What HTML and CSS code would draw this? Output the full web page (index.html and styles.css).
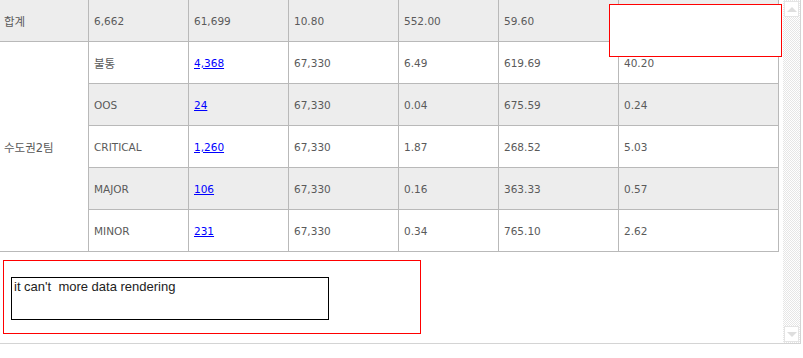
FILE: index.html
```html
<!DOCTYPE html>
<html>
<head>
<meta charset="utf-8">
<link rel="stylesheet" href="styles.css">
</head>
<body>
<div class="frame">
  <div class="content">
    <table class="grid">
      <colgroup>
        <col class="c1"><col class="c2"><col class="c3"><col class="c4"><col class="c5"><col class="c6"><col class="c7">
      </colgroup>
      <tr class="gray">
        <td class="ko">합계</td><td>6,662</td><td>61,699</td><td>10.80</td><td>552.00</td><td>59.60</td><td></td>
      </tr>
      <tr>
        <td rowspan="5" class="team ko">수도권2팀</td><td class="ko">불통</td><td><a href="#">4,368</a></td><td>67,330</td><td>6.49</td><td>619.69</td><td>40.20</td>
      </tr>
      <tr class="gray">
        <td>OOS</td><td><a href="#">24</a></td><td>67,330</td><td>0.04</td><td>675.59</td><td>0.24</td>
      </tr>
      <tr>
        <td>CRITICAL</td><td><a href="#">1,260</a></td><td>67,330</td><td>1.87</td><td>268.52</td><td>5.03</td>
      </tr>
      <tr class="gray">
        <td>MAJOR</td><td><a href="#">106</a></td><td>67,330</td><td>0.16</td><td>363.33</td><td>0.57</td>
      </tr>
      <tr>
        <td>MINOR</td><td><a href="#">231</a></td><td>67,330</td><td>0.34</td><td>765.10</td><td>2.62</td>
      </tr>
    </table>
    <div class="notice">
      <div class="message">it can't&nbsp; more data rendering</div>
    </div>
    <div class="overlay"></div>
  </div>
  <div class="scrollbar">
    <div class="btn up"><span class="tri-up"></span></div>
    <div class="track"></div>
    <div class="btn down"><span class="tri-down"></span></div>
  </div>
</div>
</body>
</html>
```
FILE: styles.css
```css
html, body {
  margin: 0;
  padding: 0;
  background: #fff;
}
body {
  font-family: "DejaVu Sans", "Noto Sans CJK KR", sans-serif;
}
.frame {
  display: flex;
  width: 801px;
  height: 344px;
  box-sizing: border-box;
  border-right: 1px solid #d4d4d4;
  border-bottom: 1px solid #d4d4d4;
}
.content {
  position: relative;
  width: 783px;
  overflow: hidden;
}
.grid {
  table-layout: fixed;
  border-collapse: separate;
  border-spacing: 0;
  width: 779px;
  font-size: 10.5px;
  color: #5a5a5a;
}
.c1 { width: 89px; }
.c2 { width: 100px; }
.c3 { width: 100px; }
.c4 { width: 110px; }
.c5 { width: 100px; }
.c6 { width: 120px; }
.c7 { width: 160px; }
.grid td {
  height: 42px;
  padding: 0 0 0 5px;
  box-sizing: border-box;
  border-right: 1px solid #b9b9b9;
  border-bottom: 1px solid #b9b9b9;
  vertical-align: middle;
  white-space: nowrap;
  background: #fff;
}
.grid tr.gray td {
  background: #ededed;
}
.grid td.ko {
  font-size: 11.5px;
}
.grid td.team {
  background: #fff;
  padding-left: 4px;
}
.grid tr:first-child td:first-child {
  padding-left: 4px;
}
.grid a {
  color: #0000ff;
  text-decoration: underline;
}
.notice {
  margin: 8px 0 0 3px;
  width: 418px;
  height: 74px;
  box-sizing: border-box;
  border: 1px solid #ff0000;
  padding: 16px 0 0 7px;
}
.message {
  width: 318px;
  height: 43px;
  box-sizing: border-box;
  border: 1px solid #000;
  padding: 1px 0 0 2px;
  font-family: "Liberation Sans", sans-serif;
  font-size: 13px;
  color: #222;
}
.overlay {
  position: absolute;
  left: 609px;
  top: 4px;
  width: 173px;
  height: 53px;
  box-sizing: border-box;
  border: 1px solid #ff0000;
  background: #fff;
}
.scrollbar {
  width: 17px;
  display: flex;
  flex-direction: column;
  background: repeating-conic-gradient(#e6e6e6 0 25%, #fff 0 50%) 0 0 / 2px 2px;
}
.track {
  flex: 1;
}
.btn {
  height: 16px;
  margin: 1px;
  box-sizing: border-box;
  border: 1px solid #e4e4e4;
  background: #fff;
  display: flex;
  align-items: center;
  justify-content: center;
}
.tri-up {
  width: 0;
  height: 0;
  border-left: 5px solid transparent;
  border-right: 5px solid transparent;
  border-bottom: 5px solid #dedede;
}
.tri-down {
  width: 0;
  height: 0;
  border-left: 5px solid transparent;
  border-right: 5px solid transparent;
  border-top: 5px solid #dedede;
}
```
